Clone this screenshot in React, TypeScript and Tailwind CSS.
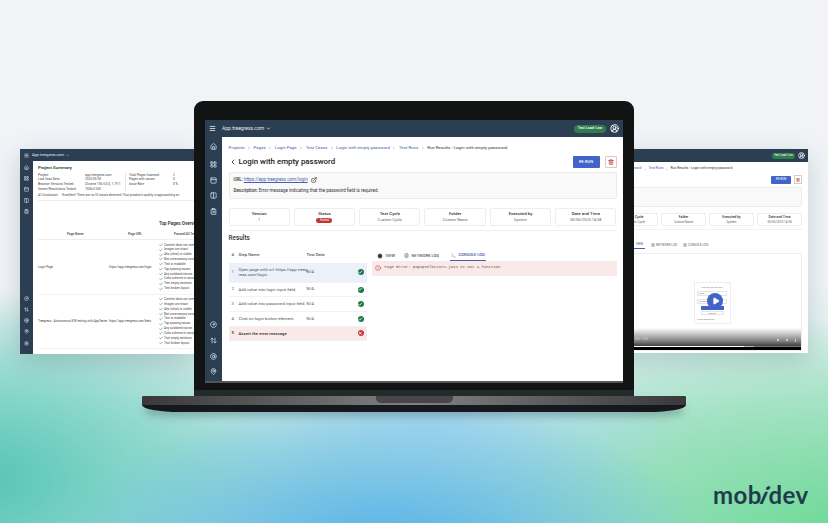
import React from "react";
import { Home, LayoutGrid, PanelTop, Columns2, ClipboardList, CircleGauge, ArrowUpDown, AtSign, MapPin, Settings, Menu, ChevronDown, ChevronLeft, ChevronRight, ExternalLink, Trash2, CircleUserRound, Check, X, CirclePlay, FileText, Terminal, CircleAlert, Play } from "lucide-react";

const crumbs = ["Projects", "Pages", "Login Page", "Test Cases", "Login with empty password", "Test Runs"];
const cards = [["Version", "1"], ["Status", ""], ["Test Cycle", "Custom Cycle"], ["Folder", "Custom Name"], ["Executed by", "System"], ["Date and Time", "06/06/2025 14:38"]];
const steps = [
  ["1", "Open page with url: https://app.treeg\nress.com/login", "N/A", true],
  ["2", "Add value into login input field.", "N/A", true],
  ["3", "Add value into password input field.", "N/A", true],
  ["4", "Click on login button element.", "N/A", true],
  ["5", "Assert the error message", "", false],
] as const;
const checks = ["Content does not overflow", "Images are intact", "Alts (what) is visible", "Not unnecessary scrolling", "Text is readable", "Tap spacing issues", "Any outdated stories", "Color scheme is consistent", "Text empty sections", "Text broken layout"];

function MainApp() {
  return (
    <div className="flex flex-col w-[418px] h-[261px] bg-white overflow-hidden">
      <div className="h-[17px] bg-[#2b3e52] flex items-center text-white shrink-0">
        <Menu className="w-[7px] h-[7px] ml-[4px]" strokeWidth={2.5} />
        <span className="ml-[6px] text-[5px] text-[#e6ebf0]">App.treegress.com</span>
        <ChevronDown className="w-[5px] h-[5px] ml-[2px]" strokeWidth={3} />
        <span className="ml-auto w-[32px] h-[8px] rounded-full bg-[#2f7d4f] text-[3.6px] font-medium flex items-center justify-center">Test Load: Low</span>
        <CircleUserRound className="w-[9px] h-[9px] ml-[4px] mr-[4px]" strokeWidth={2.5} />
      </div>
      <div className="flex flex-1 min-h-0">
        <div className="w-[17px] bg-[#2b3e52] flex flex-col items-center text-[#e4e9ef] pt-[5.5px] pb-[6px] shrink-0">
          <Home className="w-[7px] h-[7px]" strokeWidth={2.4} />
          <LayoutGrid className="w-[7px] h-[7px] mt-[11px]" strokeWidth={2.4} />
          <PanelTop className="w-[7px] h-[7px] mt-[9px]" strokeWidth={2.4} />
          <Columns2 className="w-[7px] h-[7px] mt-[8px]" strokeWidth={2.4} />
          <ClipboardList className="w-[7px] h-[7px] mt-[9px]" strokeWidth={2.4} />
          <CircleGauge className="w-[7px] h-[7px] mt-auto" strokeWidth={2.4} />
          <ArrowUpDown className="w-[7px] h-[7px] mt-[9px]" strokeWidth={2.4} />
          <AtSign className="w-[7px] h-[7px] mt-[9px]" strokeWidth={2.4} />
          <MapPin className="w-[7px] h-[7px] mt-[8px]" strokeWidth={2.4} />
        </div>
        <div className="flex-1 min-w-0 px-[6.5px] pt-[7px] text-[#222]">
          <div className="flex items-center h-[8px] text-[4.4px] text-[#4a5eae] whitespace-nowrap">
            {crumbs.map((c) => (
              <React.Fragment key={c}>
                <span>{c}</span>
                <ChevronRight className="w-[4px] h-[4px] mx-[2.5px] text-[#555]" />
              </React.Fragment>
            ))}
            <span className="text-[#333]">Run Results - Login with empty password</span>
          </div>
          <div className="flex items-center h-[17px] mt-[1.5px]">
            <ChevronLeft className="w-[8px] h-[8px]" strokeWidth={2.5} />
            <span className="ml-[2px] text-[7.9px] font-medium text-[#222]">Login with empty password</span>
            <span className="ml-auto w-[27px] h-[12px] rounded-[1px] bg-[#4263c8] text-white text-[4px] font-medium flex items-center justify-center">RE-RUN</span>
            <span className="ml-[5px] w-[12px] h-[12px] rounded-[1px] border border-[#e3c4c0] flex items-center justify-center">
              <Trash2 className="w-[6px] h-[6px] text-[#b5372e]" strokeWidth={2.6} />
            </span>
          </div>
          <div className="mt-[1.5px] h-[27px] rounded-[2px] border border-[#ececec] bg-[#f9f9f9] px-[4px] pt-[3px] text-[4.5px] text-[#333]">
            <div className="flex items-center h-[8px]">
              <b className="font-medium">URL:</b>
              <span className="ml-[1px] underline text-[#4a5eae]">https://app.treegress.com/login</span>
              <ExternalLink className="w-[6px] h-[6px] ml-[3px]" strokeWidth={2.4} />
            </div>
            <div className="mt-[3.5px]"><b className="font-medium">Description:</b> Error message indicating that the password field is required.</div>
          </div>
          <div className="mt-[8.5px] grid grid-cols-6 gap-[4px] pb-[3.5px] border-b border-[#f0f0f0]">
            {cards.map(([k, v]) => (
              <div key={k} className="h-[18.5px] rounded-[2px] border border-[#eeeeee] flex flex-col items-center pt-[1.5px]">
                <span className="text-[4.4px] font-medium leading-[7px] text-[#333]">{k}</span>
                {k === "Status" ? (
                  <span className="mt-[0.5px] w-[16px] h-[5.5px] rounded-full bg-[#c0392f] text-white text-[3.4px] leading-[5.5px] text-center">Failed</span>
                ) : (
                  <span className="text-[3.9px] leading-[6px] text-[#666]">{v}</span>
                )}
              </div>
            ))}
          </div>
          <div className="mt-[3.5px] text-[6.4px] font-medium leading-[9px] text-[#333]">Results</div>
          <div className="mt-[4px] flex gap-[5px]">
            <div className="w-[138px] shrink-0 text-[4.25px] text-[#555]">
              <div className="flex items-center h-[15.8px] font-medium">
                <span className="w-[10px] shrink-0 pl-[3px]">#</span>
                <span className="w-[68px] shrink-0">Step Name</span>
                <span>Test Data</span>
              </div>
              {steps.map(([n, s, d, ok]) => (
                <div key={n} className={`flex items-center border-b border-[#f2f2f2] ${n === "1" ? "h-[20px] bg-[#ecf0fb]" : "h-[14.6px]"} ${n === "5" ? "bg-[#f9e9e8] font-medium text-[#333]" : ""}`}>
                  <span className="w-[10px] shrink-0 pl-[3px]">{n}</span>
                  <span className="w-[68px] shrink-0 whitespace-pre leading-[5.5px]">{s}</span>
                  <span>{d}</span>
                  <span className={`ml-auto mr-[3px] w-[6px] h-[6px] rounded-full flex items-center justify-center text-white ${ok ? "bg-[#1f7a46]" : "bg-[#c73a3a]"}`}>
                    {ok ? <Check className="w-[4.5px] h-[4.5px]" strokeWidth={4} /> : <X className="w-[4.5px] h-[4.5px]" strokeWidth={4} />}
                  </span>
                </div>
              ))}
            </div>
            <div className="flex-1 min-w-0 mt-[3.5px]">
              <div className="flex items-center h-[10px] text-[4px] text-[#555] font-medium">
                <span className="flex items-center pl-[5px] w-[32px]"><CirclePlay className="w-[6px] h-[6px] mr-[3px] fill-[#333] text-white" strokeWidth={2} />VIEW</span>
                <span className="flex items-center w-[46px]"><FileText className="w-[5px] h-[5px] mr-[3px]" />NETWORK LOG</span>
                <span className="flex items-center h-full px-[1px] border-b border-[#4a5eae] text-[#3b4f9e]"><Terminal className="w-[5px] h-[5px] mr-[3px]" />CONSOLE LOG</span>
              </div>
              <div className="h-[15.7px] bg-[#f9e9e8] rounded-[1px] flex items-center pl-[3px] font-['Liberation_Mono',monospace] text-[3.95px] text-[#555]">
                <CircleAlert className="w-[6px] h-[6px] mr-[4px] text-[#c73a3a]" />
                Page Error: popupSelectors.join is not a function
              </div>
            </div>
          </div>
        </div>
      </div>
    </div>
  );
}

function LeftApp() {
  const rows = [
    ["Login Page", "https://app.treegress.com/login"],
    ["Treegress - Autonomous E2E testing with AppTester", "https://app.treegress.com/beta"],
  ];
  return (
    <div className="absolute left-[20px] top-[149px] w-[174px] h-[205px] flex flex-col overflow-hidden bg-white shadow-[0_8px_24px_rgba(60,90,100,0.25)]">
      <div className="h-[12px] bg-[#2b3e52] flex items-center text-white shrink-0">
        <Menu className="w-[5px] h-[5px] ml-[4px]" strokeWidth={2.5} />
        <span className="ml-[3px] text-[3.8px] text-[#e6ebf0]">App.treegress.com</span>
        <ChevronDown className="w-[3px] h-[3px] ml-[2px]" strokeWidth={3} />
      </div>
      <div className="flex flex-1 min-h-0">
        <div className="w-[13px] bg-[#2b3e52] flex flex-col items-center text-[#e4e9ef] pt-[4px] pb-[8px] shrink-0">
          <Home className="w-[5px] h-[5px]" strokeWidth={2.4} />
          <LayoutGrid className="w-[5px] h-[5px] mt-[6px]" strokeWidth={2.4} />
          <PanelTop className="w-[5px] h-[5px] mt-[6px]" strokeWidth={2.4} />
          <Columns2 className="w-[5px] h-[5px] mt-[6px]" strokeWidth={2.4} />
          <ClipboardList className="w-[5px] h-[5px] mt-[6px]" strokeWidth={2.4} />
          <CircleGauge className="w-[5px] h-[5px] mt-auto" strokeWidth={2.4} />
          <ArrowUpDown className="w-[5px] h-[5px] mt-[6px]" strokeWidth={2.4} />
          <AtSign className="w-[5px] h-[5px] mt-[6px]" strokeWidth={2.4} />
          <MapPin className="w-[5px] h-[5px] mt-[6px]" strokeWidth={2.4} />
          <Settings className="w-[5px] h-[5px] mt-[7px]" strokeWidth={2.4} />
        </div>
        <div className="flex-1 min-w-0 pl-[5px] pt-[4px] text-[3.2px] text-[#444] whitespace-nowrap">
          <div className="text-[4.4px] font-medium leading-[6px] text-[#222]">Project Summary</div>
          <div className="mt-[1.5px] flex h-[18px] leading-[4.7px]">
            <div className="w-[47px]"><div>Project:</div><div>Last Scan Date:</div><div>Browser Versions Tested:</div><div>Screen Resolutions Tested:</div></div>
            <div className="w-[41px] border-r border-[#e5e5e5]"><div>app.treegress.com</div><div>2025-05-30</div><div>Chrome 136.0.0.0, 1.19.1</div><div>1536x1260</div></div>
            <div className="pl-[3px] w-[47px]"><div>Total Pages Scanned:</div><div>Pages with issues:</div><div>Issue Rate:</div></div>
            <div><div>2</div><div>0</div><div>0 %</div></div>
          </div>
          <div className="mt-[2.5px] leading-[5px]">AI Conclusion: &nbsp;&nbsp;&nbsp; Excellent! There are no UI issues detected. Your product's quality is approaching an</div>
          <div className="mt-[2px] border-t border-[#eeeeee] h-[21px]" />
          <div className="pl-[121px] text-[4.6px] font-medium leading-[6px] text-[#222]">Top Pages Overview</div>
          <div className="mt-[5px] flex h-[8px] border-b border-[#eeeeee] font-medium leading-[5px]">
            <span className="pl-[29px] w-[121px] shrink-0 flex"><span className="w-[61px]">Page Name</span><span>Page URL</span></span>
            <span className="pl-[15px]">Passed/All Tests</span>
          </div>
          {rows.map(([n, u]) => (
            <div key={n} className="flex items-center border-b border-[#f2f2f2] h-[54.5px]">
              <span className="w-[71px] shrink-0 text-[3px]">{n}</span>
              <span className="w-[50px] shrink-0 text-[3px]">{u}</span>
              <div className="leading-[4.85px]">
                {checks.map((c) => (
                  <div key={c} className="flex items-center text-[3.1px]"><Check className="w-[4px] h-[4px] mr-[1px] text-[#1f7a46]" strokeWidth={3.5} />{c}</div>
                ))}
              </div>
            </div>
          ))}
        </div>
      </div>
    </div>
  );
}

function RightApp() {
  const visible = cards.slice(2);
  return (
    <div className="absolute left-[620px] top-[149px] w-[188px] h-[204px] flex flex-col overflow-hidden bg-white shadow-[0_8px_24px_rgba(60,110,100,0.25)]">
      <div className="h-[13px] bg-[#2b3e52] flex items-center justify-end text-white shrink-0">
        <span className="w-[23px] h-[6px] rounded-full bg-[#2f7d4f] text-[2.8px] flex items-center justify-center">Test Load: Low</span>
        <CircleUserRound className="w-[7px] h-[7px] ml-[3px] mr-[3px]" strokeWidth={2.5} />
      </div>
      <div className="flex flex-col items-end pr-[6px] text-[3.4px] text-[#444] whitespace-nowrap">
        <div className="mt-[4px] h-[6px] flex items-center text-[#4a5eae] w-full pl-[14px]">
          <span>word</span><ChevronRight className="w-[3px] h-[3px] mx-[2px] text-[#555]" /><span>Test Runs</span><ChevronRight className="w-[3px] h-[3px] mx-[2px] text-[#555]" />
          <span className="text-[#333]">Run Results - Login with empty password</span>
        </div>
        <div className="mt-[3px] flex items-center">
          <span className="w-[20px] h-[8px] rounded-[1px] bg-[#4263c8] text-white text-[3px] flex items-center justify-center">RE-RUN</span>
          <span className="ml-[3px] w-[8px] h-[9px] border border-[#e3c4c0] flex items-center justify-center"><Trash2 className="w-[4px] h-[4px] text-[#b5372e]" strokeWidth={2.6} /></span>
        </div>
        <div className="mt-[3px] w-full h-[20px] rounded-[2px] border border-[#ececec] bg-[#f9f9f9]" />
        <div className="mt-[6px] flex gap-[3px] pb-[2.5px] border-b border-[#f2f2f2] w-full justify-end">
          {visible.map(([k, v]) => (
            <div key={k} className="w-[45px] h-[13px] shrink-0 rounded-[2px] border border-[#eeeeee] flex flex-col items-center pt-[1px]">
              <span className="text-[3.4px] font-medium leading-[5px] text-[#333]">{k}</span>
              <span className="text-[3px] leading-[4.5px] text-[#666]">{v}</span>
            </div>
          ))}
        </div>
        <div className="mt-[12px] h-[7px] w-full flex items-center text-[3.1px] text-[#666]">
          <span className="ml-[14px] w-[11px] h-full border-b border-[#4a5eae] text-[#3b4f9e] flex items-center justify-end pr-[2px]">VIEW</span>
          <span className="ml-[4px] w-[34px] flex items-center justify-start pl-[2px]"><FileText className="w-[4px] h-[4px] mr-[1px]" />NETWORK LOG</span>
          <span className="flex items-center"><FileText className="w-[4px] h-[4px] mr-[1px]" />CONSOLE LOG</span>
        </div>
        <div className="mt-[4px] w-full h-[98px] border border-[#eeeeee] flex flex-col relative overflow-hidden">
          <div className="flex-1 flex items-start justify-center pt-[28px] pl-[2px]">
            <div className="w-[37px] h-[42px] border border-[#eeeeee] flex flex-col items-center pt-[3px] text-[2.2px] text-[#777]">
              <div className="w-[30px] text-center">Login to your account</div>
              <div className="mt-[2px] w-[30px] h-[5px] border border-[#e5e5e5] pl-[1px]">Email</div>
              <div className="mt-[3px] w-[30px] h-[5px] border border-[#e5e5e5] pl-[1px]">Password</div>
              <div className="mt-[2px] w-[23px] h-[4px] bg-[#4263c8]" />
              <div className="mt-[1px] w-[23px] h-[4px] border border-[#e5e5e5] text-center text-[#4a5eae] leading-[3px]">Sign up</div>
              <div className="mt-[3px] w-[30px]">Forgot password?</div>
            </div>
          </div>
          <div className="absolute left-[86px] top-[39px] w-[16px] h-[16px] rounded-full bg-[#4263c8] flex items-center justify-center">
            <Play className="w-[8px] h-[8px] text-white fill-white ml-[1px]" />
          </div>
          <div className="absolute bottom-0 inset-x-0 h-[22px] bg-gradient-to-b from-transparent via-[#808080] via-60% to-[#111]" />
          <div className="absolute bottom-0 inset-x-0 h-[4px] bg-black" />
          <div className="absolute bottom-[3px] inset-x-0 h-[1px] bg-[#777]">
            <div className="relative h-full w-[74%] bg-[#bbb]"><div className="h-full w-[92%] bg-white" /></div>
          </div>
          <div className="absolute bottom-[8px] left-[14px] text-[2.8px] text-[#ddd]">0:01 / 0:07</div>
          <div className="absolute bottom-[8px] right-[5px] flex gap-[7px] items-center">
            <span className="w-[2px] h-[2px] bg-[#ccc]" />
            <span className="w-[2px] h-[2px] bg-[#ccc]" />
            <span className="w-[1px] h-[3px] bg-[#ccc]" />
          </div>
        </div>
      </div>
    </div>
  );
}

export default function App() {
  return (
    <div className="relative w-[828px] h-[523px] overflow-hidden font-['Roboto',sans-serif] bg-[radial-gradient(ellipse_330px_150px_at_385px_550px,#55b1ea_0%,#6ebde8cc_45%,rgba(95,179,232,0)_100%),radial-gradient(ellipse_260px_85px_at_430px_430px,#a5d7ee_0%,rgba(169,217,238,0)_100%),radial-gradient(ellipse_430px_220px_at_850px_540px,#6bd994_0%,#8fdfb0cc_50%,rgba(120,218,160,0)_100%),radial-gradient(ellipse_310px_190px_at_-20px_480px,#55c4b5_0%,#7dd3c6cc_50%,rgba(114,214,187,0)_100%),linear-gradient(180deg,#f1f3f7_0%,#f1f3f7_55%,#d8edec_68%,#aee2d6_86%,#a0ddd0_100%)]">
      <LeftApp />
      <RightApp />

      {/* laptop */}
      <div className="absolute left-[194px] top-[101px] w-[440px] h-[296px] rounded-t-[9px] bg-[#111413] border-b-[7px] border-[#222b2a] pl-[11px] pt-[19px]">
        <div className="border-b-[2px] border-[#555] w-[418px]">
          <MainApp />
        </div>
      </div>
      <div className="absolute left-[142px] top-[396px] w-[544px] h-[16px] rounded-t-[2px] rounded-b-[38px_7px] bg-[#17181d] shadow-[0_7px_8px_-3px_rgba(20,40,60,0.3)] overflow-hidden">
        <div className="h-[9px] bg-gradient-to-r from-[#39393c] via-[#828285] to-[#39393c]" />
        <div className="absolute left-[234px] top-0 w-[77px] h-[6.5px] rounded-b-[5px] bg-[#47474b]" />
      </div>

      {/* logo */}
      <div className="absolute left-[713px] top-[481px] text-[24px] leading-[28px] font-bold font-['Lato',sans-serif] tracking-[0.45px] text-[#1e3c4b]">
        mob<span className="inline-block -skew-x-[24deg]">i</span>dev
      </div>
    </div>
  );
}
